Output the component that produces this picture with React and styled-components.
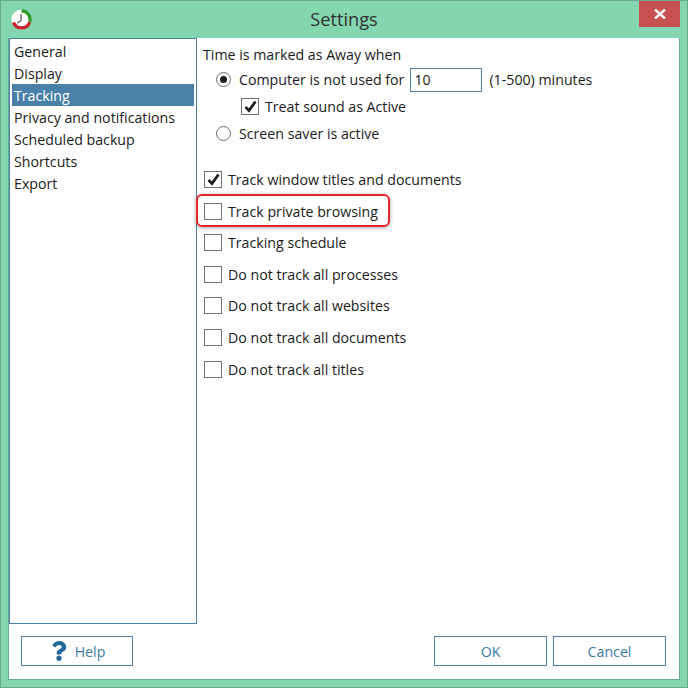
import React from 'react';
import styled, { createGlobalStyle } from 'styled-components';
import { FaQuestion } from 'react-icons/fa';

const GlobalStyle = createGlobalStyle`
  html, body {
    margin: 0;
    padding: 0;
    background: #83d6b0;
  }
  body {
    font-family: "Open Sans", "Noto Sans", "Liberation Sans", sans-serif;
    font-size: 14.2px;
    color: #1a1a1a;
  }
`;

const Window = styled.div`
  width: 688px;
  height: 688px;
  box-sizing: border-box;
  border: 1px solid #6aa896;
  background: #83d6b0;
  display: flex;
  flex-direction: column;
`;

const TitleBar = styled.div`
  height: 37px;
  flex: none;
  display: grid;
  grid-template-columns: 60px 1fr 53px;
  padding-right: 7px;
`;

const AppIcon = styled.svg`
  width: 21px;
  height: 21px;
  margin: 8px 0 0 10px;
`;

const Title = styled.div`
  text-align: center;
  font-size: 18.2px;
  line-height: 37px;
  color: #333;
`;

const CloseButton = styled.div`
  justify-self: end;
  width: 41px;
  height: 26px;
  background: #c75050;
  display: flex;
  align-items: center;
  justify-content: center;
`;

const Content = styled.div`
  flex: 1;
  margin: 0 7px 7px;
  background: #fff;
  border: 1px solid #6aa896;
  border-width: 0 1px 1px;
  display: flex;
  flex-direction: column;
  min-height: 0;
`;

const Panes = styled.div`
  flex: 1;
  display: flex;
  min-height: 0;
`;

const NavList = styled.div`
  width: 188px;
  height: 586px;
  flex: none;
  box-sizing: border-box;
  border: 1px solid #4a80a8;
  padding: 1px 2px;
`;

const NavItem = styled.div`
  height: 22px;
  line-height: 24px;
  padding-left: 2px;
  color: ${(p) => (p.$active ? '#fff' : '#1a1a1a')};
  background: ${(p) => (p.$active ? '#4a80a8' : 'transparent')};
`;

const Settings = styled.div`
  flex: 1;
  padding: 6px 0 0 6px;
`;

const Heading = styled.div`
  height: 22px;
  line-height: 22px;
`;

const AwayOptions = styled.div`
  padding-left: 13px;
`;

const Row = styled.label`
  position: relative;
  display: flex;
  align-items: center;
  height: ${(p) => p.$height || 31.65}px;
  padding-left: ${(p) => p.$indent || 0}px;
`;

const RadioMark = styled.span`
  width: 15px;
  height: 15px;
  flex: none;
  box-sizing: border-box;
  border: 1px solid #6b6b6b;
  border-radius: 50%;
  margin-right: 8px;
  display: flex;
  align-items: center;
  justify-content: center;
  &::after {
    content: '';
    display: ${(p) => (p.$on ? 'block' : 'none')};
    width: 7px;
    height: 7px;
    border-radius: 50%;
    background: #1f1f1f;
  }
`;

const CheckMark = styled.span`
  width: 18px;
  height: 17px;
  flex: none;
  box-sizing: border-box;
  border: 1px solid #707070;
  margin-right: 6px;
  display: flex;
  align-items: center;
  justify-content: center;
`;

const NumberInput = styled.div`
  width: 72px;
  height: 24px;
  box-sizing: border-box;
  border: 1px solid #4a80a8;
  margin: 0 7px 0 6px;
  padding-left: 3px;
  line-height: 22px;
`;

const Checks = styled.div`
  margin-top: 16.6px;
  padding-left: 1px;
`;

const Highlight = styled.span`
  position: absolute;
  left: -8px;
  top: -1px;
  width: 194px;
  height: 33px;
  box-sizing: border-box;
  border: 2px solid #e5262b;
  border-radius: 6px;
  box-shadow: 0 1px 4px rgba(0, 0, 0, 0.35);
  pointer-events: none;
`;

const Footer = styled.div`
  flex: none;
  height: 55px;
  box-sizing: border-box;
  display: flex;
  align-items: flex-start;
  padding: 12px 0 0 12px;
`;

const Button = styled.div`
  width: ${(p) => p.$width || 113}px;
  height: 30px;
  box-sizing: border-box;
  border: 1px solid #4a80a8;
  color: #3a7aa3;
  display: flex;
  align-items: center;
  justify-content: center;
  gap: 6px;
  margin-left: ${(p) => p.$gap || 0}px;
`;

const Tick = () => (
  <svg width="15" height="15" viewBox="0 0 15 15">
    <path d="M2.5 8 L6 11.5 L12.5 2.5" fill="none" stroke="#1f1f1f" strokeWidth="2.8" />
  </svg>
);

const Checkbox = ({ checked, children, highlight }) => (
  <Row>
    <CheckMark>{checked && <Tick />}</CheckMark>
    {children}
    {highlight && <Highlight />}
  </Row>
);

const navItems = [
  'General',
  'Display',
  'Tracking',
  'Privacy and notifications',
  'Scheduled backup',
  'Shortcuts',
  'Export',
];

const App = () => (
  <>
    <GlobalStyle />
    <Window>
      <TitleBar>
        <AppIcon viewBox="0 0 22 22">
          <circle cx="11" cy="11" r="10.5" fill="#fff" />
          <path d="M11 2 A9 9 0 0 1 19.5 14" fill="none" stroke="#2e9a2e" strokeWidth="3.4" />
          <path d="M19.5 14 A9 9 0 0 1 2.6 14" fill="none" stroke="#c8242b" strokeWidth="3.4" />
          <path d="M10.5 5 L10.5 12 L6.5 15" fill="none" stroke="#555" strokeWidth="1.3" />
        </AppIcon>
        <Title>Settings</Title>
        <CloseButton>
          <svg width="12" height="10" viewBox="0 0 12 10">
            <path d="M1 0.5 L11 9.5 M11 0.5 L1 9.5" stroke="#fff" strokeWidth="2.4" />
          </svg>
        </CloseButton>
      </TitleBar>
      <Content>
        <Panes>
          <NavList>
            {navItems.map((item) => (
              <NavItem key={item} $active={item === 'Tracking'}>
                {item}
              </NavItem>
            ))}
          </NavList>
          <Settings>
            <Heading>Time is marked as Away when</Heading>
            <AwayOptions>
              <Row $height={27}>
                <RadioMark $on />
                Computer is not used for
                <NumberInput>10</NumberInput>
                (1-500) minutes
              </Row>
              <Row $height={27} $indent={25}>
                <CheckMark>
                  <Tick />
                </CheckMark>
                Treat sound as Active
              </Row>
              <Row $height={27}>
                <RadioMark />
                Screen saver is active
              </Row>
            </AwayOptions>
            <Checks>
              <Checkbox checked>Track window titles and documents</Checkbox>
              <Checkbox highlight>Track private browsing</Checkbox>
              <Checkbox>Tracking schedule</Checkbox>
              <Checkbox>Do not track all processes</Checkbox>
              <Checkbox>Do not track all websites</Checkbox>
              <Checkbox>Do not track all documents</Checkbox>
              <Checkbox>Do not track all titles</Checkbox>
            </Checks>
          </Settings>
        </Panes>
        <Footer>
          <Button $width={112}>
            <FaQuestion size={20} color="#24689a" />
            Help
          </Button>
          <Button $gap={301}>OK</Button>
          <Button $gap={6}>Cancel</Button>
        </Footer>
      </Content>
    </Window>
  </>
);

export default App;
